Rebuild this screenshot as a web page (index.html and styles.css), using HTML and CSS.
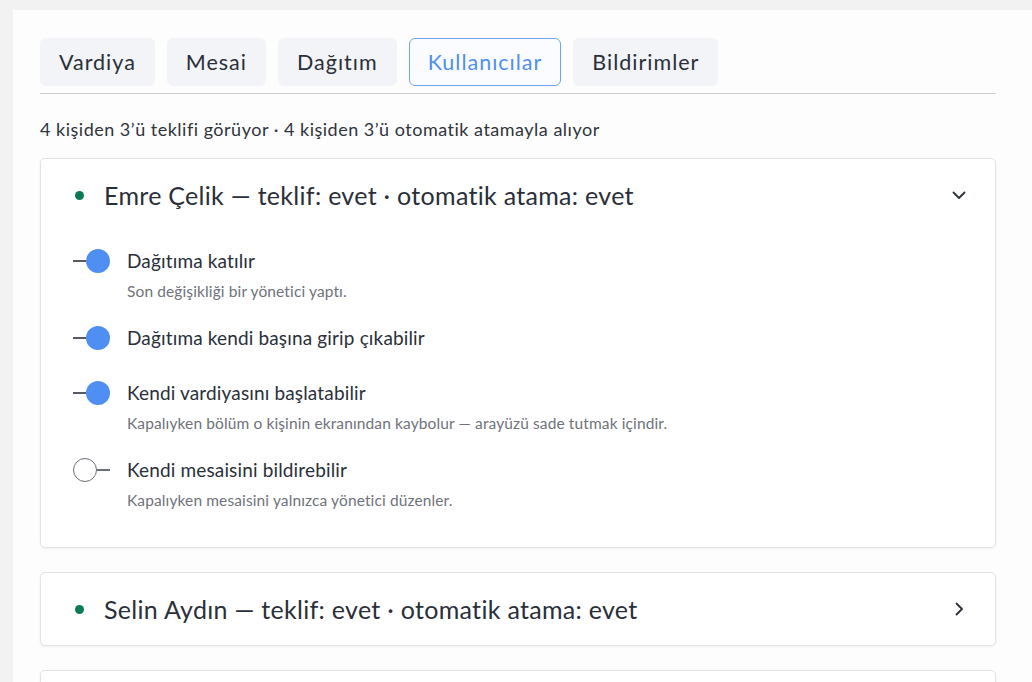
FILE: index.html
```html
<!DOCTYPE html>
<html lang="tr">
<head>
<meta charset="utf-8">
<link rel="stylesheet" href="styles.css">
</head>
<body>
<div class="panel">
  <nav class="tabs">
    <button class="tab">Vardiya</button>
    <button class="tab">Mesai</button>
    <button class="tab">Dağıtım</button>
    <button class="tab active">Kullanıcılar</button>
    <button class="tab">Bildirimler</button>
  </nav>
  <p class="summary">4 kişiden 3’ü teklifi görüyor · 4 kişiden 3’ü otomatik atamayla alıyor</p>

  <section class="card">
    <div class="card-head">
      <span class="dot"></span>
      <span class="title">Emre Çelik — teklif: evet · otomatik atama: evet</span>
      <svg class="chev" width="16" height="16" viewBox="0 0 16 16"><path d="M2.5 5.5 L8 11 L13.5 5.5" fill="none" stroke="#2a2f3a" stroke-width="1.8" stroke-linecap="round" stroke-linejoin="round"/></svg>
    </div>
    <div class="rows">
      <div class="row">
        <span class="sw on"><span class="track"></span><span class="knob"></span></span>
        <div class="txt">
          <div class="label">Dağıtıma katılır</div>
          <div class="sub">Son değişikliği bir yönetici yaptı.</div>
        </div>
      </div>
      <div class="row">
        <span class="sw on"><span class="track"></span><span class="knob"></span></span>
        <div class="txt">
          <div class="label">Dağıtıma kendi başına girip çıkabilir</div>
        </div>
      </div>
      <div class="row">
        <span class="sw on"><span class="track"></span><span class="knob"></span></span>
        <div class="txt">
          <div class="label">Kendi vardiyasını başlatabilir</div>
          <div class="sub">Kapalıyken bölüm o kişinin ekranından kaybolur — arayüzü sade tutmak içindir.</div>
        </div>
      </div>
      <div class="row">
        <span class="sw off"><span class="knob"></span><span class="track"></span></span>
        <div class="txt">
          <div class="label">Kendi mesaisini bildirebilir</div>
          <div class="sub">Kapalıyken mesaisini yalnızca yönetici düzenler.</div>
        </div>
      </div>
    </div>
  </section>

  <section class="card">
    <div class="card-head">
      <span class="dot"></span>
      <span class="title">Selin Aydın — teklif: evet · otomatik atama: evet</span>
      <svg class="chev" width="16" height="16" viewBox="0 0 16 16"><path d="M5.5 2.5 L11 8 L5.5 13.5" fill="none" stroke="#2a2f3a" stroke-width="1.8" stroke-linecap="round" stroke-linejoin="round"/></svg>
    </div>
  </section>

  <section class="card">
    <div class="card-head"></div>
  </section>
</div>
</body>
</html>
```

FILE: styles.css
```css
* { box-sizing: border-box; }
html, body { margin: 0; padding: 0; }
body {
  background: #f2f2f2;
  font-family: "Lato", "Noto Sans", sans-serif;
  color: #2a2f3a;
  height: 682px;
  overflow: hidden;
}
.panel {
  margin: 10px 0 0 13px;
  background: #fdfdfd;
  padding: 28px 36px 0 27px;
  height: 672px;
  overflow: hidden;
}
.tabs {
  display: flex;
  gap: 12px;
  padding-bottom: 7px;
  border-bottom: 1px solid #cfcfd2;
}
.tab {
  font-family: inherit;
  font-size: 21.5px;
  letter-spacing: 1px;
  color: #2a2f3a;
  background: #f3f4f7;
  border: 1px solid #f3f4f7;
  border-radius: 6px;
  height: 48px;
  padding: 0 18px;
  cursor: pointer;
}
.tab.active {
  background: #fbfcff;
  border-color: #6ea4f6;
  color: #4f8ff3;
}
.summary {
  margin: 24px 0 18px;
  font-size: 18px;
  letter-spacing: 0.5px;
  color: #30343c;
}
.card {
  background: #fff;
  border: 1px solid #e3e4e8;
  border-radius: 5px;
  box-shadow: 0 1px 3px rgba(0,0,0,0.06);
  margin-bottom: 24px;
}
.card-head {
  display: flex;
  align-items: center;
  height: 72px;
  padding: 0 28px 0 34px;
}
.dot {
  width: 9px;
  height: 9px;
  border-radius: 50%;
  background: #0b7a52;
  margin-right: 20px;
  flex: none;
}
.title {
  font-size: 25px;
  letter-spacing: 0.3px;
  flex: 1;
  color: #2a2f3a;
}
.chev { flex: none; }
.rows {
  padding: 17px 0 37px 32px;
  display: flex;
  flex-direction: column;
  gap: 24px;
}
.row {
  display: flex;
  align-items: flex-start;
  min-height: 31px;
}
.sw {
  width: 37px;
  height: 26px;
  display: flex;
  align-items: center;
  margin-right: 17px;
  flex: none;
}
.track {
  display: block;
  height: 1.5px;
  background: #555a63;
  flex: 1;
}
.knob {
  display: block;
  width: 24px;
  height: 24px;
  border-radius: 50%;
  flex: none;
}
.sw.on .knob { background: #4f8ff3; }
.sw.off .knob { background: #fff; border: 1.5px solid #6b6f77; }
.sw.off .track { background: #6b6f77; }
.label {
  font-size: 19px;
  letter-spacing: 0.15px;
  line-height: 26px;
  color: #2a2f3a;
}
.sub {
  font-size: 15.5px;
  letter-spacing: 0.12px;
  line-height: 20px;
  margin-top: 7px;
  color: #6f737b;
}
```
